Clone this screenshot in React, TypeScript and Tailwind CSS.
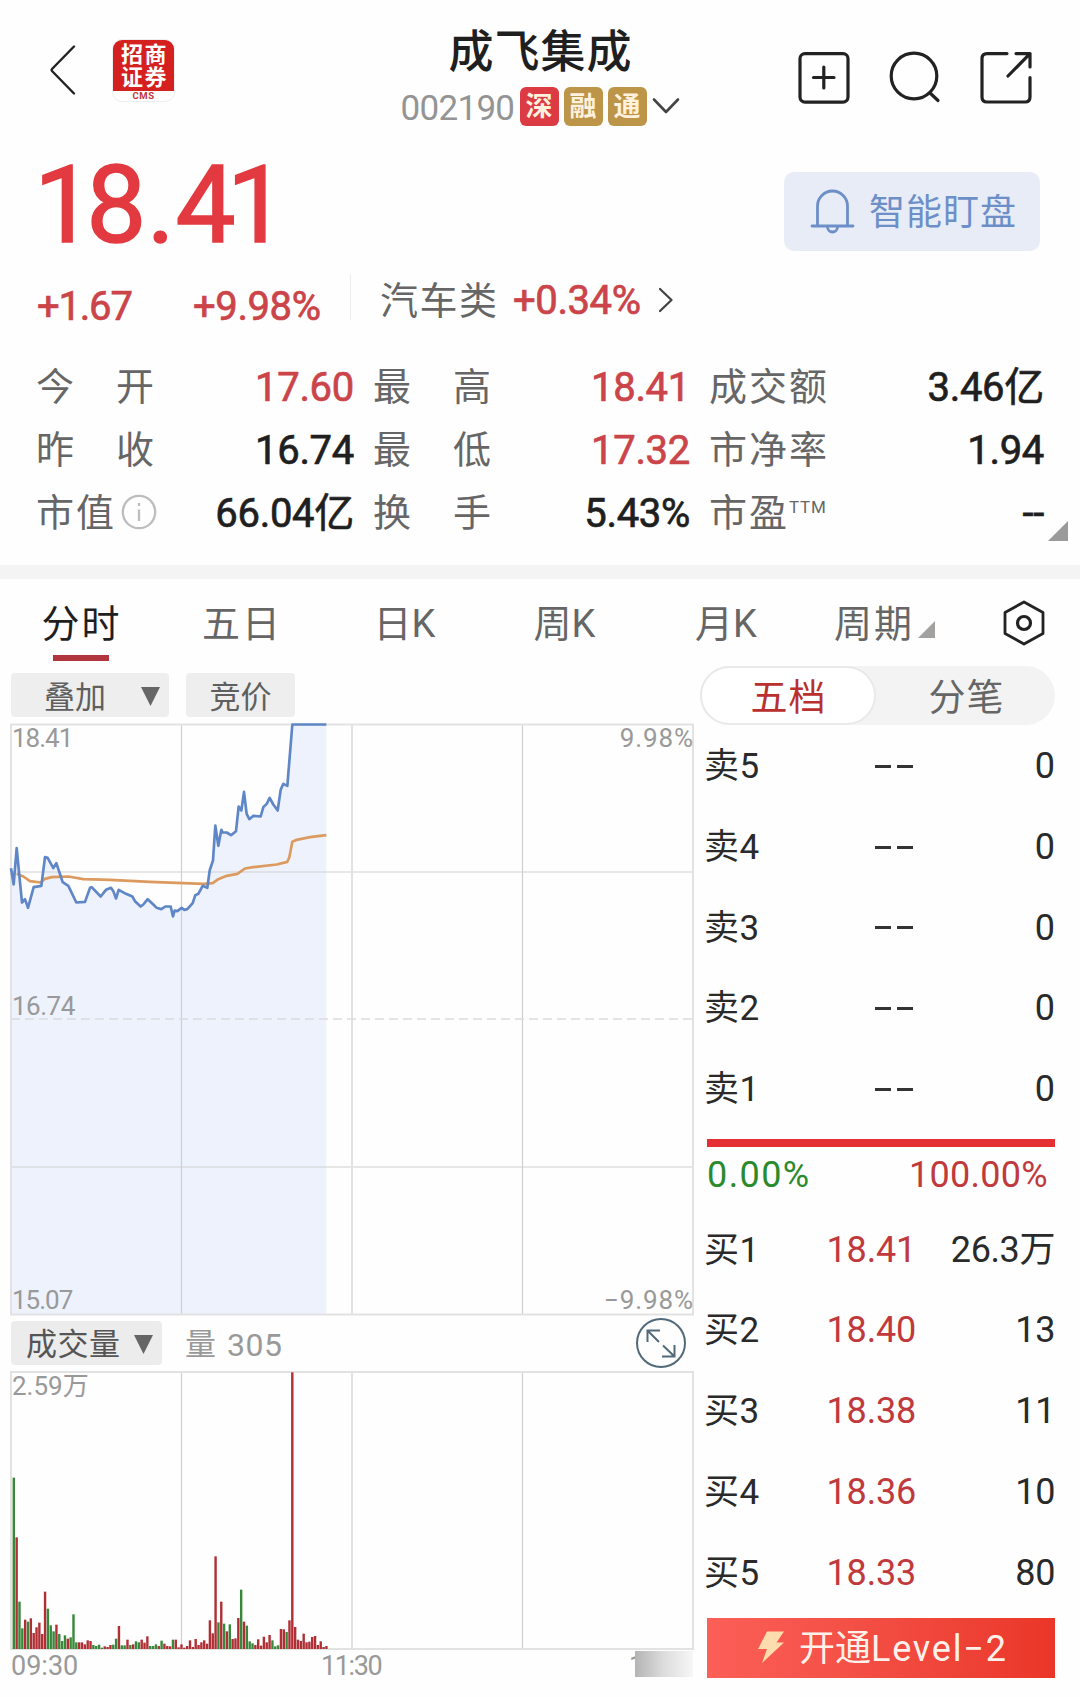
import React from "react";

type Tone = "up" | "down";

const VOLUME: [number, Tone][] = (
  "514g 335r 142g 62g 88r 82g 92r 48r 65r 79r 45r 172r 121g 71g 53g 73r 45g 24g 41g 31r 35g 104g 20g 20r 20r 14r 26r 24r 12g 9g 13g 4g 8r 6r 12r 13g 31g 69r 11g 11g 28r 12g 14r 23g 20g 28r 19r 38r 9g 9g 14g 9r 25g 16r 9r 8r 28g 28r 5r 14r 4r 9r 26r 6r 30r 12r 20r 26r 16r 86r 47r 278r 80g 142r 76g 53r 74g 30r 32r 93r 178g 82r 70g 23g 17g 12r 29r 10r 37r 20r 42r 26g 8g 11g 60r 59r 51g 86r 830r 66r 28r 24r 46r 20r 22r 36r 39r 12r 23r 6r 9r"
).split(" ").map((s) => [parseInt(s, 10) / 3, s.endsWith("r") ? "up" : "down"]);

const PRICE_LINE =
  "33,503 41,552 50,443 66,606 75,596 84,622 101,560 124,556 135,470 143,472 160,503 169,488 188,545 205,556 229,606 255,604 270,562 275,560 302,588 318,568 333,562 340,572 348,594 356,568 378,580 397,588 405,602 422,618 430,612 443,596 460,612 470,622 484,626 496,618 512,618 519,648 524,630 532,632 545,622 553,628 562,626 578,608 586,584 595,580 608,556 622,562 629,510 639,480 646,375 655,436 664,388 668,396 680,396 693,404 708,392 716,318 724,330 732,274 740,340 748,356 760,346 782,348 790,320 800,310 809,292 820,312 833,330 842,268 850,250 862,256 877,72 979,72";

const AVERAGE_LINE =
  "50,520 70,528 90,542 122,546 135,535 155,530 205,528 250,536 330,538 450,544 550,548 610,550 638,548 655,536 680,526 712,520 735,504 760,500 830,492 862,484 868,470 877,424 890,418 930,410 979,404";

function Header() {
  return (
    <header className="grid h-[140px] shrink-0 grid-cols-[1fr_auto_1fr] items-start">
      <div className="flex pl-[49px] pt-[39px]">
        <svg width="28" height="52" viewBox="0 0 28 52" className="mt-[5px]" fill="none" stroke="#222" strokeWidth="2.4" strokeLinecap="round" strokeLinejoin="round">
          <path d="M25 2.5 L3 25 Q2 26 3 27 L25 49.5" />
        </svg>
        <div className="ml-[35px] flex h-[63px] w-[63px] flex-col overflow-hidden rounded-[10px] border border-[#eee] bg-white">
          <div className="flex h-[52px] flex-col items-center justify-center bg-[#d4201f] pl-[2px] text-[22px] font-bold leading-[23px] tracking-[1.500px] text-white">
            <span>招商</span>
            <span>证券</span>
          </div>
          <div className="text-center text-[9.500px] font-bold leading-[10px] tracking-[0.600px] text-[#c5343a]">CMS</div>
        </div>
      </div>
      <div className="flex flex-col items-center pt-[23px]">
        <h1 className="h-[60px] pl-px text-[45px] font-medium leading-[60px] tracking-[1px] text-[#1f1f1f]">成飞集成</h1>
        <div className="mt-[4px] flex h-[39px] items-start">
          <span className="w-[119px] text-[35px] leading-[43px] tracking-[-0.700px] text-[#949494]">002190</span>
          <div className="flex gap-[5px] text-[27px] font-bold leading-[40px] text-[#fff1dc]">
            <span className="size-[39px] rounded-[6px] bg-[#dd3b43] text-center">深</span>
            <span className="size-[39px] rounded-[6px] bg-[#bd9549] text-center">融</span>
            <span className="size-[39px] rounded-[6px] bg-[#bd9549] text-center">通</span>
          </div>
          <svg width="28" height="18" viewBox="0 0 28 18" className="ml-[5px] mt-[10px]" fill="none" stroke="#444" strokeWidth="2.600" strokeLinecap="round" strokeLinejoin="round">
            <path d="M2 2.5 L14 15 L26 2.5" />
          </svg>
        </div>
      </div>
      <div className="flex justify-end gap-[39px] pr-[48px] pt-[51px]">
        <svg width="52" height="54" viewBox="0 0 52 54" fill="none" stroke="#222" strokeWidth="3.200" strokeLinecap="round">
          <rect x="2" y="2.6" width="48" height="48.5" rx="5" />
          <path d="M15.500 26.500 H36 M25.800 16 V37" />
        </svg>
        <svg width="52" height="54" viewBox="0 0 52 54" fill="none" stroke="#222" strokeWidth="3.200" strokeLinecap="round">
          <circle cx="25" cy="25" r="22.800" />
          <path d="M41 42 L49 49.500" />
        </svg>
        <svg width="52" height="54" viewBox="0 0 52 54" fill="none" stroke="#222" strokeWidth="3.200" strokeLinecap="round" strokeLinejoin="round">
          <path d="M27 2.600 H7 Q2 2.600 2 7.600 V46 Q2 51 7 51 H45 Q50 51 50 46 V26.500" />
          <path d="M36 2.600 H50 V16 M50 2.600 L28 25" />
        </svg>
      </div>
    </header>
  );
}

function PriceRow() {
  return (
    <section className="flex h-[128px] shrink-0 items-start justify-between pl-[34px] pr-[40px]">
      <div className="mt-[16px] whitespace-nowrap text-[107px] leading-[100px] text-[#e23a40] [-webkit-text-stroke:1.500px_#e23a40]">
        <span className="tracking-[-8px]">1</span>
        <span className="tracking-[0.500px]">8.</span>
        <span className="tracking-[-9px]">41</span>
      </div>
      <div className="mt-[32px] flex h-[79px] w-[256px] items-center rounded-[10px] bg-[#e7ecf7] pl-[26px] text-[#6d8fc8]">
        <svg width="45" height="46" viewBox="0 0 45 46" fill="none" stroke="currentColor" strokeWidth="2.800" strokeLinecap="round">
          <path d="M2 37 H43 M7.500 37 V17 A15 15 0 0 1 37.500 17 V37 M17.500 38 A5 5 0 0 0 27.500 38" />
        </svg>
        <span className="ml-[14px] pt-[3px] text-[36px] leading-[60px] tracking-[1px]">智能盯盘</span>
      </div>
    </section>
  );
}

function ChangeRow() {
  return (
    <section className="flex h-[62px] shrink-0 items-start pl-[37px] text-[40px] leading-[62px] text-[#cb4449]">
      <span className="w-[156px] pt-[8px] tracking-[-1.200px] [-webkit-text-stroke:0.700px_#cb4449]">+1.67</span>
      <span className="w-[157px] pt-[8px] tracking-[-0.400px] [-webkit-text-stroke:0.700px_#cb4449]">+9.98%</span>
      <span className="mt-[6px] h-[46px] w-px bg-[#eeeeee]" />
      <span className="ml-[29px] w-[133px] pt-[2px] text-[38px] tracking-[1.500px] text-[#666]">汽车类</span>
      <span className="w-[145px] pt-[2px] tracking-[-0.400px] [-webkit-text-stroke:0.700px_#cb4449]">+0.34%</span>
      <svg width="16" height="26" viewBox="0 0 16 26" className="mt-[19px]" fill="none" stroke="#444" strokeWidth="2.300" strokeLinecap="round" strokeLinejoin="round">
        <path d="M2 2 L13.500 13 L2 24" />
      </svg>
    </section>
  );
}

const STATS: { label: string; value: string; red?: boolean; kind?: "info" | "ttm" }[] = [
  { label: "今　开", value: "17.60", red: true },
  { label: "最　高", value: "18.41", red: true },
  { label: "成交额", value: "3.46亿" },
  { label: "昨　收", value: "16.74" },
  { label: "最　低", value: "17.32", red: true },
  { label: "市净率", value: "1.94" },
  { label: "市值", value: "66.04亿", kind: "info" },
  { label: "换　手", value: "5.43%" },
  { label: "市盈", value: "--", kind: "ttm" },
];

function Stats() {
  return (
    <section className="relative mt-[26px] grid h-[189px] shrink-0 grid-cols-[318px_317px_335px] grid-rows-3 gap-x-[19px] pl-[36px]">
      {STATS.map((s) => (
        <div key={s.label} className="flex items-center justify-between whitespace-nowrap leading-[63px]">
          <span className="flex items-center text-[38px] tracking-[2px] text-[#666]">
            {s.label}
            {s.kind === "info" && (
              <svg width="36" height="36" viewBox="0 0 36 36" className="mb-[3px] ml-[5px]" fill="none" stroke="#bdbdbd" strokeWidth="2.300">
                <circle cx="18" cy="18" r="16.200" />
                <path d="M18 15.500 V27 M18 9 V12" />
              </svg>
            )}
            {s.kind === "ttm" && <span className="mb-[14px] text-[17px] leading-[20px] tracking-[0.800px]">TTM</span>}
          </span>
          <span
            className={
              s.red
                ? "text-[40px] tracking-[-0.300px] text-[#cb4449] [-webkit-text-stroke:0.700px_#cb4449]"
                : "text-[40px] tracking-[-0.300px] text-[#1f1f1f] [-webkit-text-stroke:0.700px_#1f1f1f]"
            }
          >
            {s.value}
          </span>
        </div>
      ))}
      <svg width="20" height="20" viewBox="0 0 20 20" className="absolute right-[12px] top-[165px]">
        <path d="M20 0 V20 H0 Z" fill="#9a9a9a" />
      </svg>
    </section>
  );
}

function Tabs() {
  return (
    <nav className="flex h-[87px] shrink-0 text-center text-[38px] leading-[91px] text-[#666]">
      <div className="relative w-[163px] tracking-[2px] text-[#1f1f1f]">
        分时
        <span className="absolute bottom-[5px] left-[53px] h-[6px] w-[56px] bg-[#b0353c]" />
      </div>
      <div className="w-[158px] tracking-[2px]">五日</div>
      <div className="w-[167px]">日K</div>
      <div className="w-[153px]">周K</div>
      <div className="w-[170px]">月K</div>
      <div className="flex w-[191px] items-start pl-[23px] tracking-[2px]">
        周期
        <svg width="17" height="17" viewBox="0 0 17 17" className="ml-[4px] mt-[42px]">
          <path d="M17 0 V17 H0 Z" fill="#a3a0a0" />
        </svg>
      </div>
      <svg width="42" height="46" viewBox="0 0 42 46" className="ml-px mt-[20.500px]" fill="none" stroke="#222" strokeLinejoin="round">
        <path d="M21 2 L40 12.500 V33.500 L21 44 L2 33.500 V12.500 Z" strokeWidth="2.800" />
        <circle cx="21" cy="23" r="6.500" strokeWidth="3.200" />
      </svg>
    </nav>
  );
}

function Caret() {
  return (
    <svg width="19" height="19" viewBox="0 0 19 19" className="mt-[14px]">
      <path d="M0 0 H19 L9.500 19 Z" fill="#666" />
    </svg>
  );
}

function PriceChart() {
  return (
    <div className="relative mt-[6px] h-[593px] text-[26px] leading-[30px] tracking-[-1px] text-[#999]">
      <svg width="686" height="593" viewBox="11 722.500 686 593" fill="none" className="overflow-visible">
        <polygon points={`33,1842 ${PRICE_LINE} 979,1842`} fill="#edf2fc" transform="translate(0 700) scale(0.333333)" />
        <path d="M181.500 724 V1314 M522.500 724 V1314 M11 871.500 H693 M11 1166.500 H693" stroke="#cfcfcf" strokeWidth="1.200" />
        <path d="M352 724 V1314" stroke="#e2e2e2" strokeWidth="2" />
        <path d="M11 1018.500 H693" stroke="#dcdcdc" strokeWidth="1.500" strokeDasharray="9 5" />
        <rect x="11" y="724" width="682" height="590" stroke="#e2e2e2" strokeWidth="2" />
        <g transform="translate(0 700) scale(0.333333)" strokeLinejoin="round">
          <polyline points={AVERAGE_LINE} stroke="#dc9a5e" strokeWidth="8" />
          <polyline points={PRICE_LINE} stroke="#5f86c6" strokeWidth="8" />
        </g>
      </svg>
      <span className="absolute left-px top-0">18.41</span>
      <span className="absolute right-0 top-0 tracking-[0.900px]">9.98%</span>
      <span className="absolute left-px top-[268px] tracking-[-0.500px]">16.74</span>
      <span className="absolute bottom-px left-px">15.07</span>
      <span className="absolute bottom-px right-0 tracking-[0.900px]">−9.98%</span>
    </div>
  );
}

function VolumeChart() {
  return (
    <div className="relative h-[280px] text-[26px] leading-[30px] text-[#999]">
      <svg width="686" height="280" viewBox="11 1371 686 280" fill="none" className="overflow-visible">
        <path d="M181.500 1372 V1649 M522.500 1372 V1649" stroke="#cfcfcf" strokeWidth="1.200" />
        <path d="M352 1372 V1649" stroke="#e2e2e2" strokeWidth="2" />
        <rect x="11" y="1372" width="682" height="277" stroke="#e2e2e2" strokeWidth="2" />
        {VOLUME.map(([h, tone], i) => (
          <rect key={i} x={12.600 + i * 2.842} y={1649 - h} width="2.400" height={h} fill={tone === "up" ? "#b02f34" : "#37883a"} />
        ))}
      </svg>
      <span className="absolute left-px top-0">2.59万</span>
    </div>
  );
}

function Charts() {
  return (
    <div className="w-[683px] shrink-0 pt-[7px]">
      <div className="flex h-[44px] text-[31px] leading-[49px] text-[#5f5f5f]">
        <div className="flex w-[158px] items-start justify-between rounded-[4px] bg-[#eeeeee] pl-[33px] pr-[9px]">
          叠加
          <Caret />
        </div>
        <div className="ml-[17px] w-[109px] rounded-[4px] bg-[#eeeeee] text-center">竞价</div>
      </div>
      <PriceChart />
      <div className="flex h-[55px] items-start pt-[5px] text-[31px] leading-[48px]">
        <div className="flex h-[44px] w-[151px] items-start justify-between rounded-[4px] bg-[#ececec] pl-[15px] pr-[9px] text-[#555]">
          <span className="tracking-[0.500px]">成交量</span>
          <Caret />
        </div>
        <span className="ml-[23px] text-[#999]">量</span>
        <span className="ml-[11px] text-[32px] tracking-[0.500px] text-[#999]">305</span>
        <svg width="52" height="52" viewBox="0 0 52 52" className="-mt-[4px] ml-auto mr-[7px]" fill="none" stroke="#52697a" strokeWidth="2">
          <circle cx="26" cy="26" r="24" />
          <path d="M24 25 L12.500 13.500 M12.500 25 V13.500 H25 M28 28.500 L39.500 39.500 M39.500 28 V39.500 H27" />
        </svg>
      </div>
      <VolumeChart />
      <div className="flex text-[27px] leading-[30px] text-[#999]">
        <span className="w-[310px]">09:30</span>
        <span className="w-[308px] tracking-[-1.400px]">11:30</span>
        <span className="w-[16px]">1</span>
        <span className="z-10 -ml-[10px] h-[26px] w-[58px] bg-gradient-to-r from-[#b4b4b4] via-[#dddddd] to-[#f7f7f7]" />
      </div>
    </div>
  );
}

const ASKS = ["卖5", "卖4", "卖3", "卖2", "卖1"];
const BIDS = [
  ["买1", "18.41", "26.3万"],
  ["买2", "18.40", "13"],
  ["买3", "18.38", "11"],
  ["买4", "18.36", "10"],
  ["买5", "18.33", "80"],
];

function OrderBook() {
  return (
    <div className="ml-[6px] flex w-[355px] flex-col text-[#2a2a2a]">
      <div className="flex h-[59px] rounded-full bg-[#f3f3f3] text-center text-[37px] leading-[62px] tracking-[1px]">
        <div className="w-[176px] rounded-full border-2 border-[#e9e9e9] bg-white pl-px text-[#b9302f]">五档</div>
        <div className="flex-1 pl-[2px] leading-[66px] text-[#666]">分笔</div>
      </div>
      <div className="pt-px text-[36px]">
        {ASKS.map((label) => (
          <div key={label} className="flex h-[80.700px] items-center pl-[4px] leading-[80px]">
            <span className="w-[94px] pt-[2px] text-[35px] tracking-[0.500px]">{label}</span>
            <span className="flex flex-1 gap-[6px] pl-[77px]">
              <i className="h-[3px] w-[16px] bg-[#333]" />
              <i className="h-[3px] w-[16px] bg-[#333]" />
            </span>
            <span>0</span>
          </div>
        ))}
      </div>
      <div className="ml-[7px] mt-[10px] h-[8px] w-[348px] bg-[#e53033]" />
      <div className="flex h-[54px] justify-between pl-[7px] pr-[7px] text-[36px] leading-[56px]">
        <span className="tracking-[1.400px] text-[#2a8a2c]">0.00%</span>
        <span className="tracking-[0.300px] text-[#c0393c]">100.00%</span>
      </div>
      <div className="mt-[8px] text-[36px]">
        {BIDS.map(([label, price, size]) => (
          <div key={label} className="flex h-[80.700px] items-center pl-[4px] leading-[80px]">
            <span className="w-[94px] pt-[2px] text-[35px] tracking-[0.500px]">{label}</span>
            <span className="w-[118px] text-right tracking-[-0.200px] text-[#c0393c]">{price}</span>
            <span className="flex-1 text-right tracking-[-0.400px]">{size}</span>
          </div>
        ))}
      </div>
      <div className="ml-[7px] mt-[5px] flex h-[60px] w-[348px] items-center bg-gradient-to-r from-[#fb5f58] to-[#ea3628] text-[36px] leading-[60px] text-[#fff1ea]">
        <svg width="28" height="34" viewBox="0 0 28 34" className="mb-[2px] ml-[50px]">
          <path d="M10 1.500 H27 L19.500 12.500 H27 L5 33 L10 19 H1 Z" fill="#fddcae" />
        </svg>
        <span className="ml-[14px] whitespace-nowrap pt-[3px]">
          开通<span className="tracking-[1.800px]">Level−2</span>
        </span>
      </div>
    </div>
  );
}

export default function App() {
  return (
    <main lang="zh-CN" className="flex h-[1697px] w-[1080px] flex-col overflow-hidden bg-[#fefefe] font-[Roboto,'Noto_Sans_CJK_SC',sans-serif]">
      <Header />
      <PriceRow />
      <ChangeRow />
      <Stats />
      <div className="mt-[20px] h-[14px] shrink-0 bg-[#f4f4f4]" />
      <Tabs />
      <div className="flex pl-[11px]">
        <Charts />
        <OrderBook />
      </div>
    </main>
  );
}
